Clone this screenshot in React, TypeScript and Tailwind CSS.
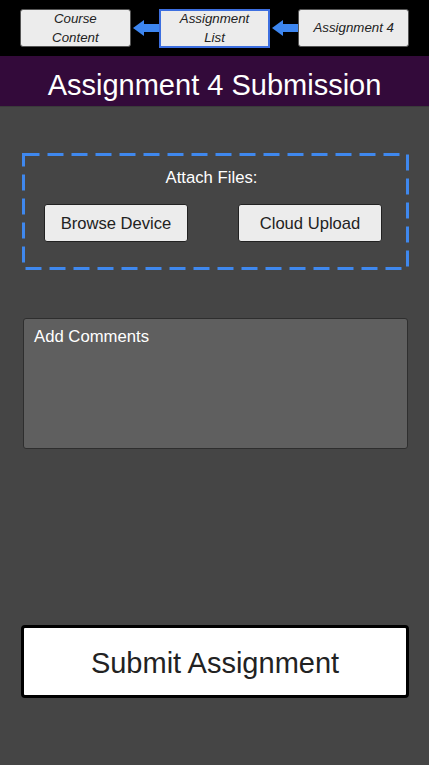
function Arrow() {
    return (
        <svg width="28" height="20" viewBox="0 0 28 20" className="shrink-0">
            <path d="M2 10 L13 2 L13 6 L28 6 L28 14 L13 14 L13 18 Z" fill="#3d86f0" />
        </svg>
    );
}

export default function App() {
    return (
        <div
            className="w-[429px] h-[765px] bg-[#454545] flex flex-col overflow-hidden"
            style={{ fontFamily: '"Liberation Sans", Arial, sans-serif' }}
        >
            {/* breadcrumb */}
            <div className="h-[56px] bg-black flex items-center px-5 shrink-0">
                <div className="w-[111px] h-[38px] bg-[#ececec] rounded-[3px] border border-[#555] flex items-center justify-center text-center italic text-[13.3px] leading-[19px] text-[#222]">
                    Course
                    <br />
                    Content
                </div>
                <Arrow />
                <div className="w-[112px] h-[39px] bg-[#ececec] border-2 border-[#3d6fe0] flex items-center justify-center text-center italic text-[13.3px] leading-[19px] text-[#222]">
                    Assignment
                    <br />
                    List
                </div>
                <Arrow />
                <div className="w-[111px] h-[38px] bg-[#ececec] rounded-[3px] border border-[#555] flex items-center justify-center italic text-[13.3px] text-[#222]">
                    Assignment 4
                </div>
            </div>

            <div className="h-[51px] bg-[#330a3a] flex items-center justify-center pt-[9px] text-white text-[29px] shrink-0 border-b border-[#3a3a3a]">
                Assignment 4 Submission
            </div>

            {/* attach files */}
            <div className="relative mt-[46px] ml-[22px] w-[387px] h-[117px] shrink-0">
                <svg className="absolute inset-0" width="387" height="117">
                    <rect
                        x="1.5"
                        y="1.5"
                        width="384"
                        height="114"
                        fill="none"
                        stroke="#3f88ee"
                        strokeWidth="3"
                        strokeDasharray="16 8"
                    />
                </svg>
                <div className="relative flex flex-col items-center pt-[15px] pr-[8px]">
                    <div className="text-white text-[16.7px] leading-[20px]">Attach Files:</div>
                    <div className="flex gap-[50px] mt-[16px] pl-[3px]">
                        <button className="w-[144px] h-[38px] bg-[#ececec] border border-[#222] rounded-[3px] pt-[3px] text-[16.6px] text-[#222]">
                            Browse Device
                        </button>
                        <button className="w-[144px] h-[38px] bg-[#ececec] border border-[#222] rounded-[3px] pt-[3px] text-[16.6px] text-[#222]">
                            Cloud Upload
                        </button>
                    </div>
                </div>
            </div>

            {/* comments */}
            <div className="mt-[48px] ml-[23px] w-[385px] h-[131px] bg-[#5f5f5f] border border-[#2e2e2e] rounded-[3px] px-[10px] pt-[8px] text-white text-[16.7px] leading-[20px] shrink-0">
                Add Comments
            </div>

            {/* submit */}
            <button className="mt-[176px] ml-[21px] w-[388px] h-[73px] bg-white border-[3px] border-black rounded-[4px] pt-[4px] text-[29px] text-[#222] shrink-0">
                Submit Assignment
            </button>
        </div>
    );
}
